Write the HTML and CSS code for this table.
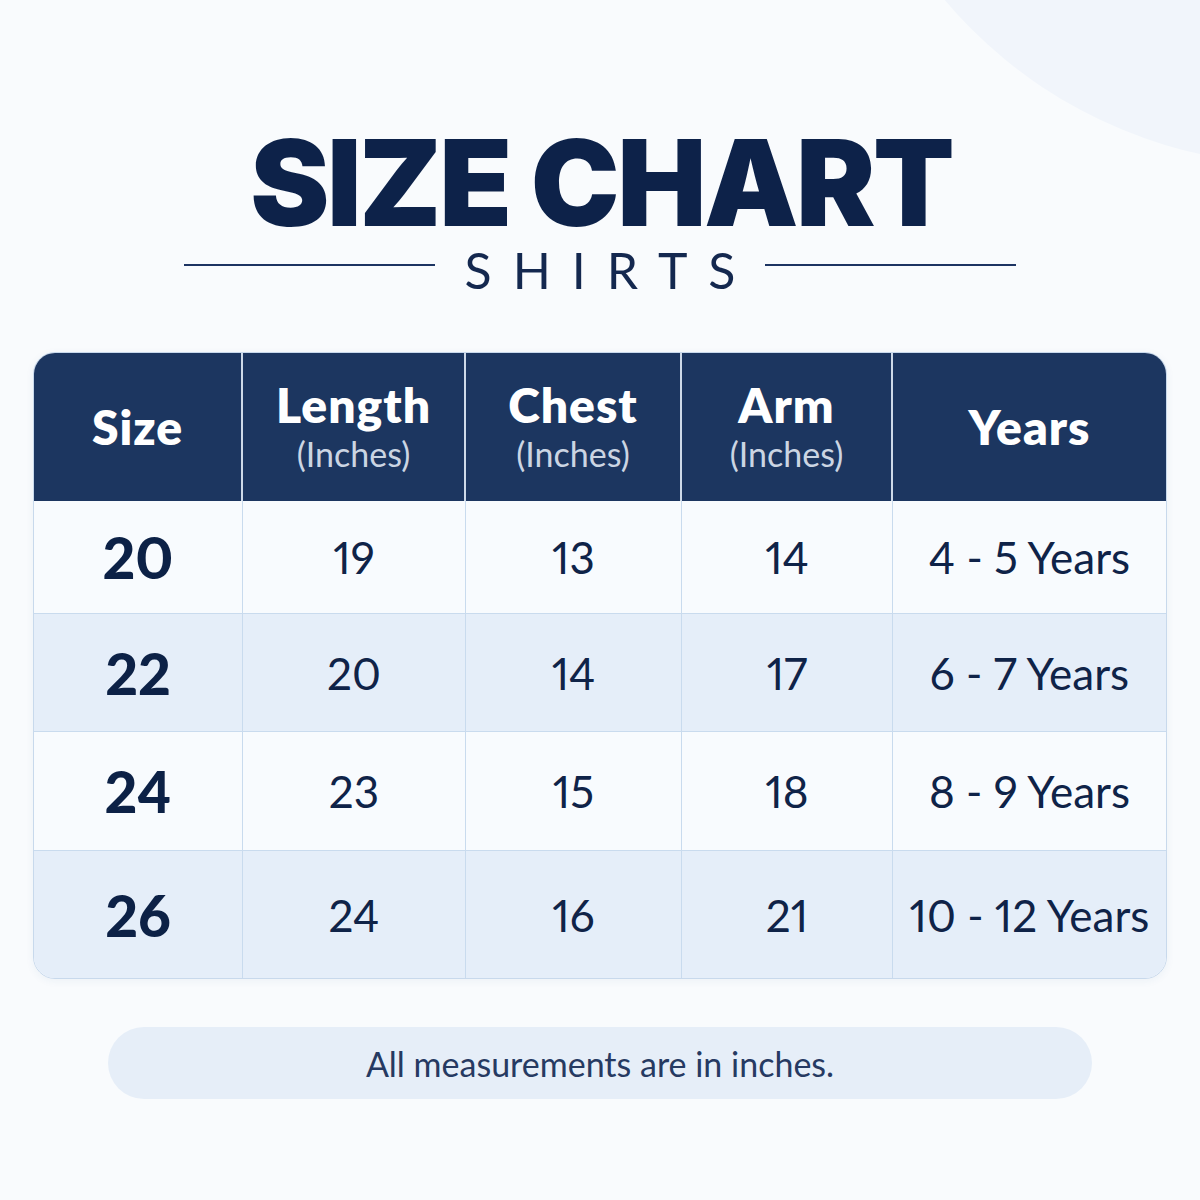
FILE: index.html
```html
<!DOCTYPE html>
<html lang="en">
<head>
<meta charset="utf-8">
<title>Size Chart - Shirts</title>
<link rel="stylesheet" href="styles.css">
</head>
<body>
<div class="page">
  <div class="blob"></div>
  <header class="head">
    <h1 class="title">SIZE CHART</h1>
    <div class="sub">
      <span class="rule"></span>
      <span class="sub-text">SHIRTS</span>
      <span class="rule"></span>
    </div>
  </header>

  <div class="chart">
    <div class="cell th"><span class="th-main">Size</span></div>
    <div class="cell th"><span class="th-main">Length</span><span class="th-unit">(Inches)</span></div>
    <div class="cell th"><span class="th-main">Chest</span><span class="th-unit">(Inches)</span></div>
    <div class="cell th"><span class="th-main">Arm</span><span class="th-unit">(Inches)</span></div>
    <div class="cell th th-last"><span class="th-main">Years</span></div>

    <div class="cell r1 size">20</div>
    <div class="cell r1">19</div>
    <div class="cell r1">13</div>
    <div class="cell r1">14</div>
    <div class="cell r1 last">4 - 5 Years</div>

    <div class="cell r2 alt size">22</div>
    <div class="cell r2 alt">20</div>
    <div class="cell r2 alt">14</div>
    <div class="cell r2 alt">17</div>
    <div class="cell r2 alt last">6 - 7 Years</div>

    <div class="cell r3 size">24</div>
    <div class="cell r3">23</div>
    <div class="cell r3">15</div>
    <div class="cell r3">18</div>
    <div class="cell r3 last">8 - 9 Years</div>

    <div class="cell r4 alt size">26</div>
    <div class="cell r4 alt">24</div>
    <div class="cell r4 alt">16</div>
    <div class="cell r4 alt">21</div>
    <div class="cell r4 alt last">10 - 12 Years</div>
  </div>

  <div class="note">All measurements are in inches.</div>
</div>
</body>
</html>
```

FILE: styles.css
```css
* { box-sizing: border-box; margin: 0; padding: 0; }

html, body {
  width: 1200px;
  height: 1200px;
  background: #f9fbfd;
}

body {
  font-family: "Lato", "Liberation Sans", sans-serif;
  color: #0f2348;
}

.page {
  position: relative;
  width: 1200px;
  height: 1200px;
  overflow: hidden;
  background: #f9fbfd;
  display: flex;
  flex-direction: column;
  align-items: center;
}

.blob {
  position: absolute;
  left: 835px;
  top: -765px;
  width: 930px;
  height: 930px;
  border-radius: 50%;
  background: #f1f5fb;
}

.head {
  position: relative;
  margin-top: 130px;
  display: flex;
  flex-direction: column;
  align-items: center;
}

.title {
  font-family: "Inter", "Lato", sans-serif;
  font-weight: 900;
  font-size: 119px;
  line-height: 0.9;
  letter-spacing: -2.5px;
  margin-right: -2.5px;
  color: #0d2249;
  text-align: center;
}

.sub {
  display: flex;
  align-items: center;
  gap: 30px;
  margin-top: 8px;
  height: 50px;
}

.rule {
  width: 251px;
  height: 2px;
  margin-bottom: 10px;
  background: #1d3462;
}

.sub-text {
  font-family: "Lato", sans-serif;
  font-weight: 400;
  font-size: 50px;
  line-height: 1;
  letter-spacing: 21px;
  margin-right: -21px;
  color: #14284f;
}

.chart {
  position: relative;
  margin-top: 57px;
  display: grid;
  grid-template-columns: 209px 223px 216px 211px 273px;
  grid-template-rows: 148px 113px 118px 119px 127px;
  border: 1px solid #c8d9ec;
  border-radius: 22px;
  overflow: hidden;
  box-shadow: 0 2px 8px rgba(40, 80, 140, 0.06);
}

.cell {
  display: flex;
  flex-direction: column;
  align-items: center;
  justify-content: center;
  border-right: 1px solid #c9dbee;
  border-bottom: 1px solid #c9dbee;
  font-size: 44px;
  font-weight: 400;
  font-variant-numeric: proportional-nums;
  color: #0f2348;
  background: #f8fbfe;
}

.cell.last { border-right: none; }
.r4 { border-bottom: none; }

.alt { background: #e5eef9; }

.th {
  background: #1c3660;
  color: #ffffff;
  border-right: 2px solid #cdd9e8;
  border-bottom: none;
}
.th-last { border-right: none; }

.th-main {
  font-weight: 800;
  font-size: 48px;
  line-height: 54px;
  letter-spacing: 1px;
}

.th-unit {
  font-weight: 400;
  font-size: 34px;
  line-height: 44px;
  color: #cbd5e3;
}

.size {
  font-weight: 900;
  font-size: 57px;
  color: #0c2146;
}

.note {
  margin-top: 48px;
  width: 984px;
  height: 72px;
  border-radius: 36px;
  background: #e6eef8;
  display: flex;
  align-items: center;
  justify-content: center;
  font-size: 34px;
  color: #263a62;
  position: relative;
}
```
